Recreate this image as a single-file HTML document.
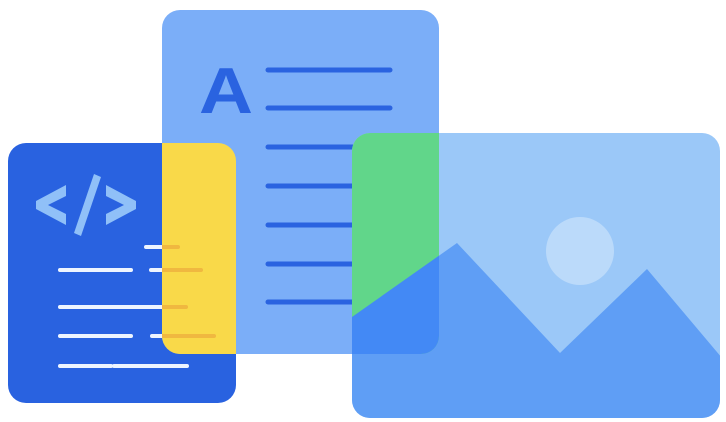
<!DOCTYPE html>
<html><head><meta charset="utf-8"><style>html,body{margin:0;padding:0;background:#fff;width:726px;height:422px;overflow:hidden}svg{display:block}</style></head>
<body>
<svg width="726" height="422" viewBox="0 0 726 422" xmlns="http://www.w3.org/2000/svg">
<defs>
<clipPath id="mid"><rect x="162" y="10" width="277" height="344" rx="18"/></clipPath>
<clipPath id="leftc"><rect x="8" y="143" width="228" height="260" rx="18"/></clipPath>
<clipPath id="img"><rect x="352" y="133" width="368" height="285" rx="18"/></clipPath>
</defs>
<rect x="8" y="143" width="228" height="260" rx="18" fill="#2962e0"/>
<g fill="#90c0f8">
<polygon points="66,185 66,196 48,205 66,214 66,225 36,209 36,201"/>
<polygon points="106,185 106,196 124,205 106,214 106,225 136,209 136,201"/>
<polygon points="94,174 101,177 81,236 74,233"/>
</g>
<g stroke="#eef5ff" stroke-width="4" stroke-linecap="round">
<line x1="146" y1="247" x2="178" y2="247"/>
<line x1="60" y1="270" x2="131" y2="270"/>
<line x1="151" y1="270" x2="201" y2="270"/>
<line x1="60" y1="307" x2="186" y2="307"/>
<line x1="60" y1="336" x2="131" y2="336"/>
<line x1="152" y1="336" x2="214" y2="336"/>
<line x1="60" y1="366" x2="111" y2="366"/>
<line x1="114" y1="366" x2="187" y2="366"/>
</g>
<rect x="162" y="10" width="277" height="344" rx="18" fill="#7baef8"/>
<text x="0" y="113" transform="translate(199,0) scale(1.15,1)" font-family="Liberation Sans, sans-serif" font-weight="bold" font-size="65" fill="#2a63e0">A</text>
<g stroke="#2a63e0" stroke-width="5" stroke-linecap="round">
<line x1="268" y1="70" x2="390" y2="70"/>
<line x1="268" y1="108" x2="390" y2="108"/>
<line x1="268" y1="147" x2="390" y2="147"/>
<line x1="268" y1="186" x2="390" y2="186"/>
<line x1="268" y1="225" x2="390" y2="225"/>
<line x1="268" y1="264" x2="390" y2="264"/>
<line x1="268" y1="302" x2="390" y2="302"/>
</g>
<g clip-path="url(#mid)"><g clip-path="url(#leftc)">
<rect x="0" y="0" width="726" height="422" fill="#f9d949"/>
<g stroke="#f0b840" stroke-width="4" stroke-linecap="round">
<line x1="146" y1="247" x2="178" y2="247"/>
<line x1="151" y1="270" x2="201" y2="270"/>
<line x1="60" y1="307" x2="186" y2="307"/>
<line x1="152" y1="336" x2="214" y2="336"/>
</g>
</g></g>
<rect x="352" y="133" width="368" height="285" rx="18" fill="#9bc8f8"/>
<g clip-path="url(#img)">
<circle cx="580" cy="251" r="34" fill="#bbdafa"/>
<polygon points="352,317 457,243 560,353 647,269 722,358 722,422 352,422" fill="#5f9ef5"/>
<g clip-path="url(#mid)">
<rect x="0" y="0" width="726" height="422" fill="#61d68a"/>
<polygon points="352,317 457,243 560,353 647,269 722,358 722,422 352,422" fill="#4389f5"/>
</g>
</g>
</svg>
</body></html>
